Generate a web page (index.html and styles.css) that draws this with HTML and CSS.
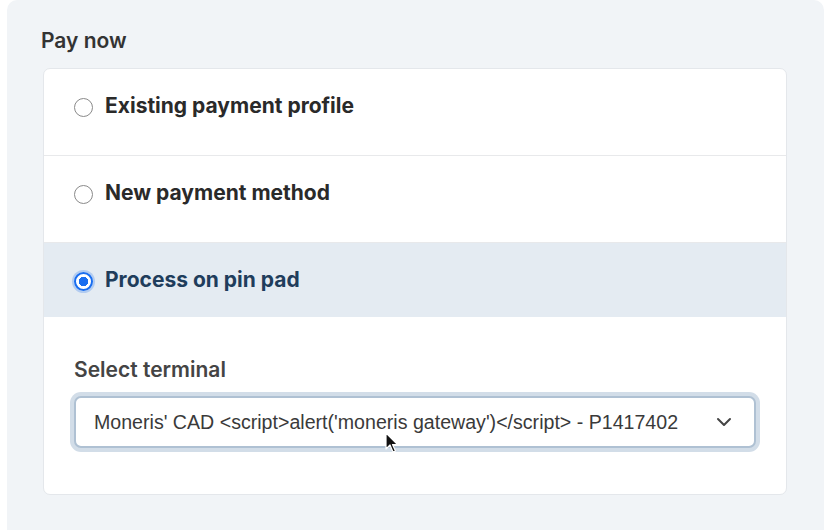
FILE: index.html
```html
<!DOCTYPE html>
<html lang="en">
<head>
    <meta charset="UTF-8">
    <title>Pay now</title>
    <link rel="stylesheet" href="styles.css">
</head>
<body>
    <div class="panel">
        <h2 class="panel-title">Pay now</h2>

        <div class="card">
            <label class="option">
                <input type="radio" name="method" class="radio">
                <span class="option-label">Existing payment profile</span>
            </label>
            <label class="option">
                <input type="radio" name="method" class="radio">
                <span class="option-label">New payment method</span>
            </label>
            <label class="option selected">
                <input type="radio" name="method" class="radio" checked>
                <span class="option-label">Process on pin pad</span>
            </label>

            <div class="option-body">
                <div class="field-label">Select terminal</div>
                <div class="select">
                    <span class="select-value">Moneris' CAD &lt;script&gt;alert('moneris gateway')&lt;/script&gt; - P1417402</span>
                    <svg class="chevron" width="16" height="10" viewBox="0 0 16 10">
                        <path d="M2 2 L8 8 L14 2" fill="none" stroke="#444" stroke-width="2" stroke-linecap="round" stroke-linejoin="round"/>
                    </svg>
                </div>
            </div>
        </div>
    </div>

    <!-- mouse pointer captured in the screenshot -->
    <svg class="cursor" width="14" height="22" viewBox="0 0 14 22">
        <path d="M1 1 L1 17 L5 13 L8 20 L10.5 19 L7.5 12.5 L12.5 12.5 Z" fill="#111" stroke="#fff" stroke-width="1.2" stroke-linejoin="round"/>
    </svg>
</body>
</html>
```

FILE: styles.css
```css
* {
    margin: 0;
    padding: 0;
    box-sizing: border-box;
}

body {
    font-family: Inter, 'Noto Sans', sans-serif;
    background: #ffffff;
    width: 834px;
    height: 530px;
    overflow: hidden;
    position: relative;
}

.panel {
    margin-left: 7px;
    width: 817px;
    height: 530px;
    background: #f1f4f7;
    border-radius: 10px 10px 0 0;
    padding: 28px 37px 0 36px;
}

.panel-title {
    font-size: 21px;
    font-weight: 600;
    color: #333;
    line-height: 26px;
    margin-bottom: 14px;
    margin-left: -2px;
}

.card {
    background: white;
    border: 1px solid #e4e7eb;
    border-radius: 7px;
    overflow: hidden;
}

.option {
    display: flex;
    align-items: center;
    gap: 12px;
    padding: 25px 30px 37px;
    border-bottom: 1px solid #e8e9eb;
    cursor: pointer;
}

.option.selected {
    background: #e4ebf2;
    padding-bottom: 25px;
    border-bottom: none;
}

.option-label {
    font-size: 21px;
    font-weight: 700;
    color: #2a2a2a;
    line-height: 24px;
}

.option.selected .option-label {
    color: #1f3d5c;
}

.radio {
    appearance: none;
    width: 19px;
    height: 19px;
    border: 1.5px solid #8a8a8a;
    border-radius: 50%;
    background: white;
    flex-shrink: 0;
    margin-top: 2px;
}

.radio:checked {
    border: 2px solid #1a6ef0;
    background: radial-gradient(circle, #1a6ef0 0 4.5px, white 5px);
    box-shadow: 0 0 0 2px rgba(26, 110, 240, 0.25);
}

.option-body {
    padding: 41px 30px 46px;
}

.field-label {
    font-size: 21px;
    font-weight: 600;
    color: #444;
    line-height: 24px;
    margin-bottom: 14px;
}

.select {
    display: flex;
    align-items: center;
    justify-content: space-between;
    height: 52px;
    padding: 0 22px 0 18px;
    background: white;
    border: 2px solid #afc1d3;
    border-radius: 7px;
    box-shadow: 0 0 0 4px #d2dde8;
}

.select-value {
    font-family: 'Liberation Sans', Arial, sans-serif;
    font-size: 19.6px;
    color: #3a3a3a;
    white-space: nowrap;
}

.chevron {
    flex-shrink: 0;
}

.cursor {
    position: absolute;
    left: 385px;
    top: 432px;
}
```
